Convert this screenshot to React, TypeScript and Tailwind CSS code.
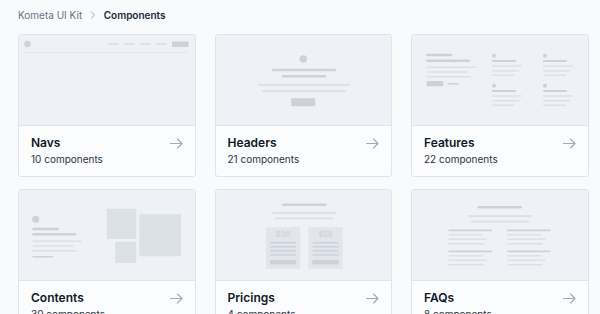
import type { ReactNode } from "react";

// ── Preview drawings (coords are from the card's outer top-left) ──────────

const DARK = "#cdd2da";
const LIGHT = "#dce0e7";

function Bar({ x1, x2, y, h = 2, c = LIGHT }: { x1: number; x2: number; y: number; h?: number; c?: string }) {
  return <rect x={x1} y={y - h / 2} width={x2 - x1} height={h} rx={h / 2} fill={c} />;
}

function NavsPreview() {
  return (
    <>
      <circle cx={9.5} cy={10} r={3.3} fill={DARK} />
      <Bar x1={90} x2={101} y={10} h={2} c={LIGHT} />
      <Bar x1={106} x2={117} y={10} h={2} c={LIGHT} />
      <Bar x1={122} x2={133} y={10} h={2} c={LIGHT} />
      <Bar x1={138} x2={149} y={10} h={2} c={LIGHT} />
      <rect x={154} y={7.5} width={16.5} height={5.5} rx={1} fill={DARK} />
      <rect x={6} y={18} width={165} height={0.8} fill="#e0e4ea" />
    </>
  );
}

function HeadersPreview() {
  return (
    <>
      <circle cx={88.3} cy={25} r={3.7} fill={DARK} />
      <Bar x1={57} x2={121} y={36} h={2.5} c={DARK} />
      <Bar x1={67} x2={111} y={42.3} h={2.5} c={DARK} />
      <Bar x1={43} x2={135} y={51} h={2} />
      <Bar x1={47} x2={131} y={57} h={2} />
      <rect x={76.3} y={64.3} width={24} height={8} rx={1} fill={DARK} />
    </>
  );
}

function FeatureCol({ x }: { x: number }) {
  return (
    <>
      {[21.7, 51.7].map((y) => (
        <g key={y}>
          <circle cx={x + 2} cy={y} r={2} fill={DARK} />
          <Bar x1={x} x2={x + 24} y={y + 5.3} h={1.8} c={DARK} />
          <Bar x1={x} x2={x + 30} y={y + 10.3} h={1.6} />
          <Bar x1={x} x2={x + 27.3} y={y + 15} h={1.6} />
          <Bar x1={x} x2={x + 23} y={y + 19.6} h={1.6} />
        </g>
      ))}
    </>
  );
}

function FeaturesPreview() {
  return (
    <>
      <Bar x1={15} x2={41.3} y={21} h={2.4} c={DARK} />
      <Bar x1={15} x2={59} y={26.7} h={2.6} c={DARK} />
      <Bar x1={15.7} x2={65} y={33.3} h={1.6} />
      <Bar x1={15.7} x2={56.7} y={38} h={1.6} />
      <Bar x1={15.7} x2={60} y={42.7} h={1.6} />
      <rect x={15.7} y={47} width={16.6} height={5.3} rx={1} fill={DARK} />
      <Bar x1={36.3} x2={48} y={49.7} h={1.4} c={DARK} />
      <FeatureCol x={81} />
      <FeatureCol x={132} />
    </>
  );
}

function ContentsPreview() {
  return (
    <>
      <circle cx={17.7} cy={30.3} r={3.5} fill={DARK} />
      <Bar x1={14.3} x2={41} y={40} h={2.4} c={DARK} />
      <Bar x1={14.3} x2={58.3} y={45.3} h={2.6} c={DARK} />
      <Bar x1={14.3} x2={63.7} y={52.3} h={1.6} />
      <Bar x1={14.3} x2={55.3} y={57} h={1.6} />
      <Bar x1={14.3} x2={59} y={61.7} h={1.6} />
      <Bar x1={14.3} x2={35.3} y={67.7} h={1.6} c={DARK} />
      <rect x={88.7} y={19.7} width={29.6} height={30.3} rx={1} fill={LIGHT} />
      <rect x={121.3} y={25.3} width={41.7} height={42} rx={1} fill={LIGHT} />
      <rect x={97.3} y={52.7} width={21} height={21.3} rx={1} fill={LIGHT} />
    </>
  );
}

function PriceCard({ x, price }: { x: number; price: string }) {
  return (
    <>
      <rect x={x} y={38.3} width={34.3} height={41.4} rx={1} fill="#e2e6ec" />
      <text
        x={x + 17.15}
        y={48}
        textAnchor="middle"
        fontSize={7.5}
        fontWeight={700}
        fill="#d0d5dd"
        fontFamily="Inter, sans-serif"
      >
        {price}
      </text>
      {[53.7, 57.7, 61.7, 66].map((y) => (
        <Bar key={y} x1={x + 4} x2={x + 30.3} y={y} h={1.6} c={DARK} />
      ))}
      <rect x={x + 4} y={71} width={26.3} height={4.4} rx={0.6} fill={DARK} />
    </>
  );
}

function PricingsPreview() {
  return (
    <>
      <Bar x1={67} x2={111.3} y={15.7} h={2.6} c={DARK} />
      <Bar x1={57} x2={121.3} y={24} h={1.8} />
      <Bar x1={60} x2={118.3} y={29.3} h={1.8} />
      <PriceCard x={51} price="$39" />
      <PriceCard x={93.3} price="$59" />
    </>
  );
}

function FaqCol({ x }: { x: number }) {
  return (
    <>
      {[41.3, 62.3].map((y) => (
        <g key={y}>
          <Bar x1={x} x2={x + 43.7} y={y} h={1.8} c={DARK} />
          <Bar x1={x} x2={x + 34.4} y={y + 4.4} h={1.6} />
          <Bar x1={x} x2={x + 38.4} y={y + 9} h={1.6} />
          <Bar x1={x} x2={x + 36} y={y + 13.4} h={1.6} />
        </g>
      ))}
    </>
  );
}

function FaqsPreview() {
  return (
    <>
      <Bar x1={66.7} x2={111} y={18.3} h={2.6} c={DARK} />
      <Bar x1={56.7} x2={121} y={27} h={1.8} />
      <Bar x1={59.7} x2={118} y={32.7} h={1.8} />
      <FaqCol x={37.3} />
      <FaqCol x={96} />
    </>
  );
}

// ── Card ──────────────────────────────────────────────────────────────────

function ArrowRight() {
  return (
    <svg width="13" height="11" viewBox="0 0 13 11" fill="none" className="mt-[2.5px] shrink-0">
      <path d="M0.5 5.5H12M7.5 1L12 5.5L7.5 10" stroke="#a3aab5" strokeWidth="1.1" strokeLinecap="round" strokeLinejoin="round" />
    </svg>
  );
}

interface CardProps {
  title: string;
  count: string;
  preview: ReactNode;
}

function ComponentCard({ title, count, preview }: CardProps) {
  return (
    <div className="rounded-[3px] border border-[#dfe4eb] bg-[#fbfcfd] overflow-hidden">
      <div className="h-[91px] bg-[#eef1f5] border-b border-[#dfe4eb]">
        <svg width="176" height="91" viewBox="1 1 176 91" className="block">
          {preview}
        </svg>
      </div>
      <div className="flex items-start justify-between pl-3 pr-[12px] pt-[9px] pb-[9px]">
        <div>
          <div className="text-[12px] leading-4 font-semibold text-[#111827]">{title}</div>
          <div className="text-[10px] leading-4 text-[#2d3440]">{count}</div>
        </div>
        <ArrowRight />
      </div>
    </div>
  );
}

const cards: CardProps[] = [
  { title: "Navs", count: "10 components", preview: <NavsPreview /> },
  { title: "Headers", count: "21 components", preview: <HeadersPreview /> },
  { title: "Features", count: "22 components", preview: <FeaturesPreview /> },
  { title: "Contents", count: "30 components", preview: <ContentsPreview /> },
  { title: "Pricings", count: "4 components", preview: <PricingsPreview /> },
  { title: "FAQs", count: "8 components", preview: <FaqsPreview /> },
];

export default function App() {
  return (
    <div className="min-h-screen bg-[#f8fafc] pl-[18px] pt-[8px]" style={{ fontFamily: "Inter, 'Noto Sans', sans-serif" }}>
      {/* Breadcrumb */}
      <div className="flex items-center h-[14px] text-[10px] leading-[14px]">
        <span className="text-[#6b7280]">Kometa UI Kit</span>
        <svg width="6" height="8" viewBox="0 0 6 8" fill="none" className="ml-[7.5px] mr-[8px]">
          <path d="M1.5 1L4.5 4L1.5 7" stroke="#9ca3af" strokeWidth="1" strokeLinecap="round" strokeLinejoin="round" />
        </svg>
        <span className="font-semibold text-[#1f2937]">Components</span>
      </div>

      <div className="mt-[12px] grid grid-cols-[repeat(3,177.5px)] gap-x-[19px] gap-y-[12px]">
        {cards.map((c) => (
          <ComponentCard key={c.title} {...c} />
        ))}
      </div>
    </div>
  );
}
